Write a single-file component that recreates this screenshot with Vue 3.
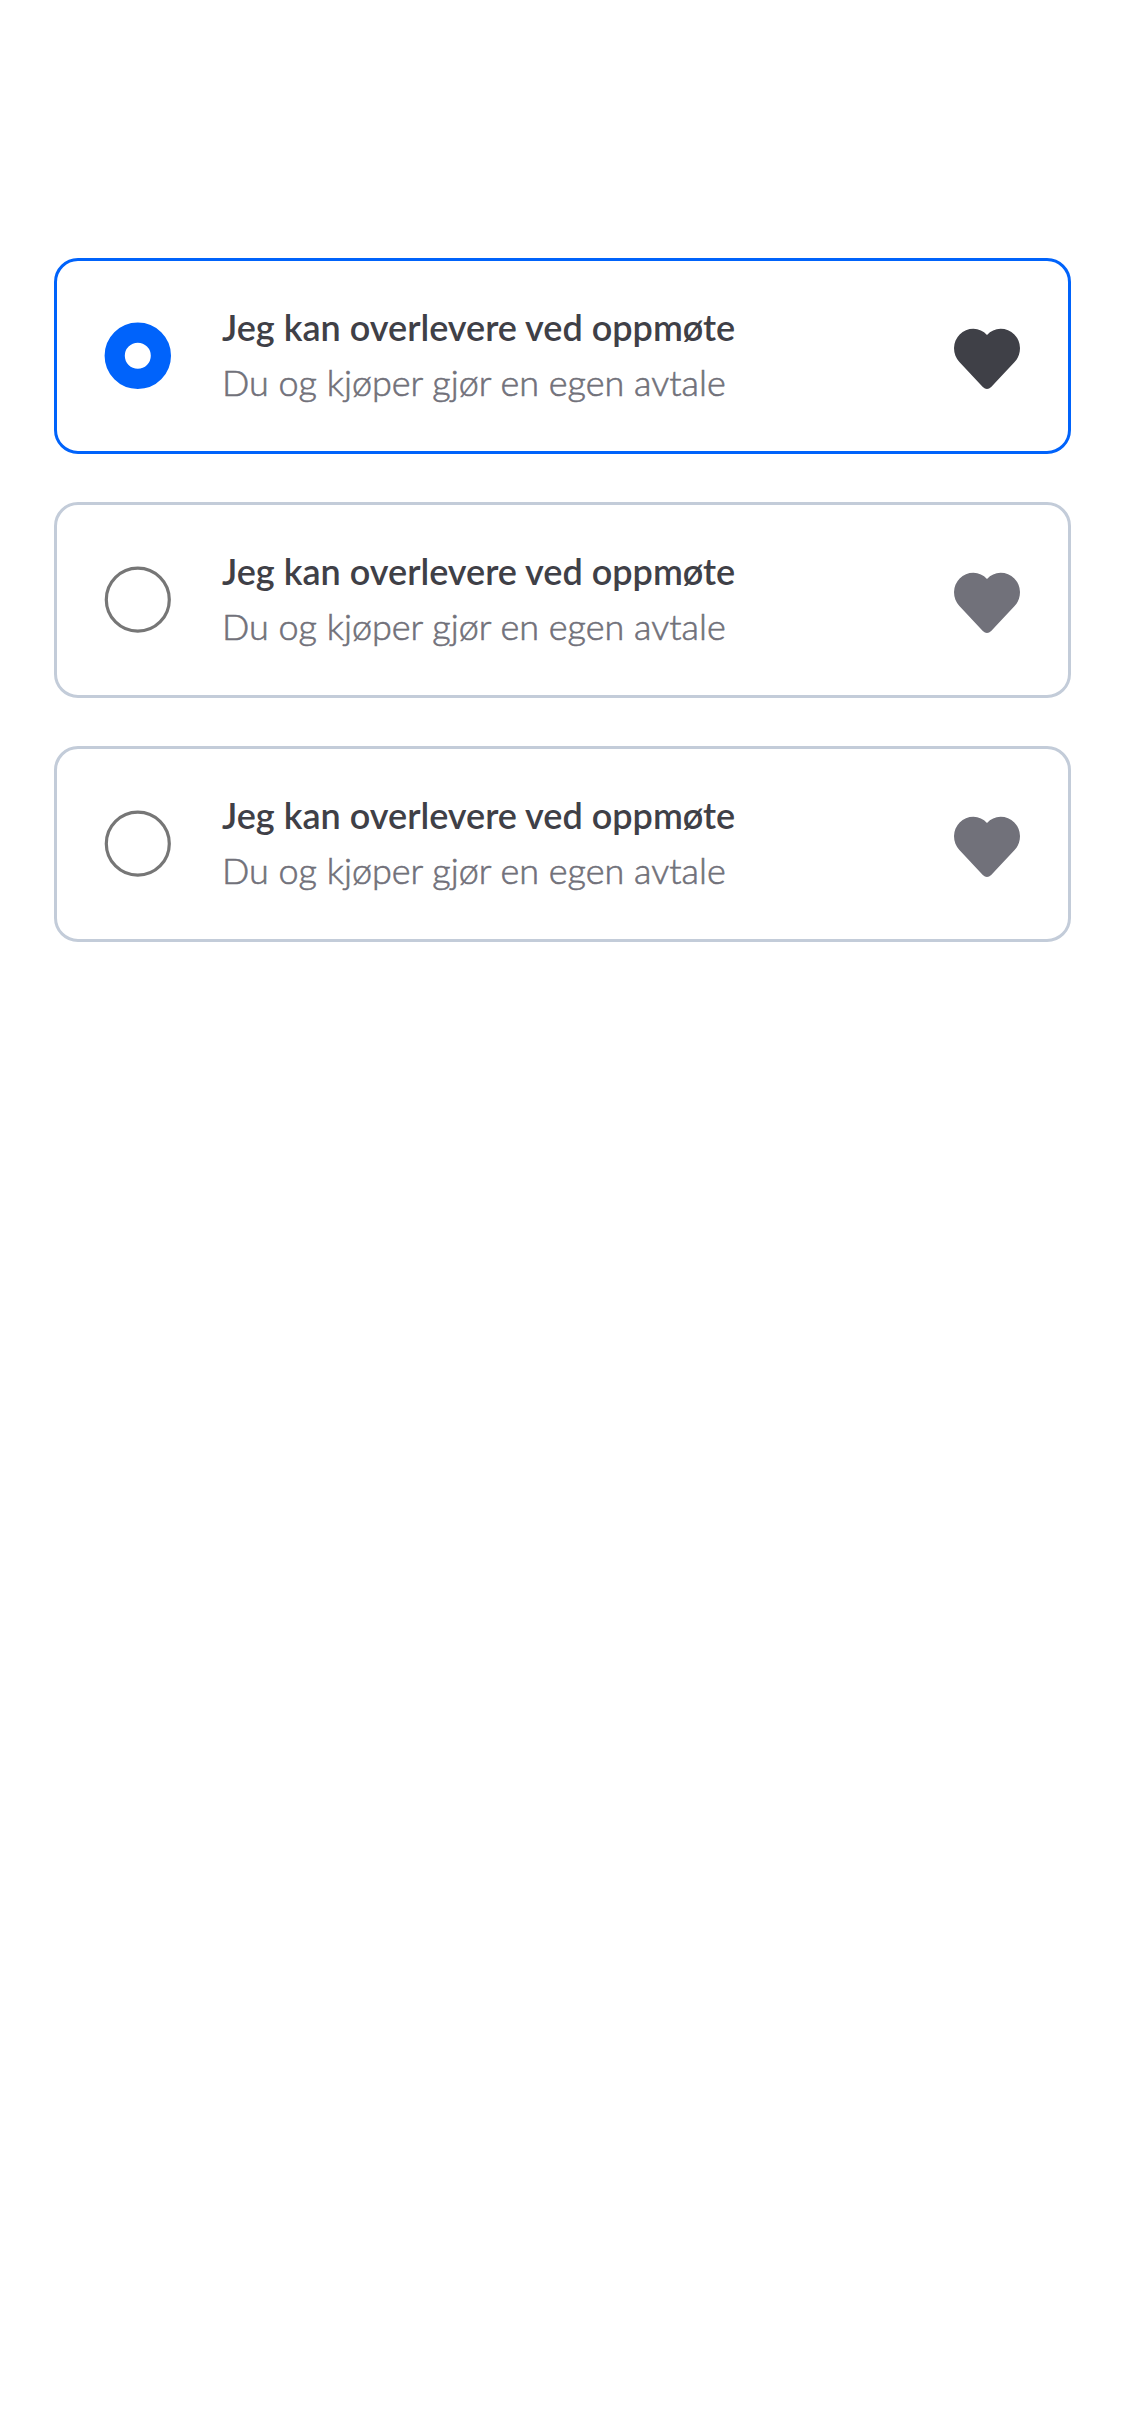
<script setup>
import { ref } from 'vue'

const selected = ref(0)
const options = [0, 1, 2].map((id) => ({
  id,
  title: 'Jeg kan overlevere ved oppmøte',
  description: 'Du og kjøper gjør en egen avtale',
}))
</script>

<template>
  <main class="screen" role="radiogroup">
    <div
      v-for="option in options"
      :key="option.id"
      class="card"
      :class="{ selected: option.id === selected }"
      role="radio"
      :aria-checked="option.id === selected"
      @click="selected = option.id"
    >
      <svg class="radio" viewBox="0 0 68 68" width="68" height="68" aria-hidden="true">
        <circle v-if="option.id === selected" class="on" cx="33.8" cy="33.8" r="23.1" />
        <circle v-else class="off" cx="33.8" cy="33.7" r="31.5" />
      </svg>
      <div class="text">
        <div class="title">{{ option.title }}</div>
        <div class="description">{{ option.description }}</div>
      </div>
      <svg class="heart" viewBox="0 0 66 62" width="66" height="62" aria-hidden="true">
        <path
          d="M33 6.9 A19.4 19.4 0 0 0 19.4 0.7 A19.4 19.4 0 0 0 0 20.1 C0 25.6 2 30.6 5.4 34.1 L28.8 59 Q33 63 37.2 59 L60.6 34.1 C64 30.6 66 25.6 66 20.1 A19.4 19.4 0 0 0 46.6 0.7 A19.4 19.4 0 0 0 33 6.9 Z"
        />
      </svg>
    </div>
  </main>
</template>

<style>
body {
  background: #fff;
}
</style>

<style scoped>
.screen {
  box-sizing: border-box;
  min-height: 2436px;
  padding: 258px 54px 0;
  display: flex;
  flex-direction: column;
  gap: 48px;
  background: #fff;
  font-family: Lato, sans-serif;
}
.card {
  box-sizing: border-box;
  height: 196px;
  padding: 0 48px 0 47px;
  display: flex;
  align-items: center;
  border: 3px solid #c3ccd9;
  border-radius: 24px;
}
.card.selected {
  border-color: #0063fb;
}
.radio {
  flex: none;
  fill: none;
}
.on {
  stroke: #0063fb;
  stroke-width: 20.2px;
}
.off {
  stroke: #767676;
  stroke-width: 3.2px;
}
.text {
  margin: 0 0 4px 50px;
  flex: 1;
  white-space: nowrap;
  font-size: 36px;
}
.title {
  color: #3f4047;
  font-weight: 600;
  line-height: 56px;
}
.description {
  color: #71717a;
  font-weight: 300;
  line-height: 55px;
  -webkit-text-stroke: 0.6px #71717a;
}
.heart {
  margin-top: 5px;
  flex: none;
  fill: #71717a;
}
.selected .heart {
  fill: #3f4047;
}
</style>
